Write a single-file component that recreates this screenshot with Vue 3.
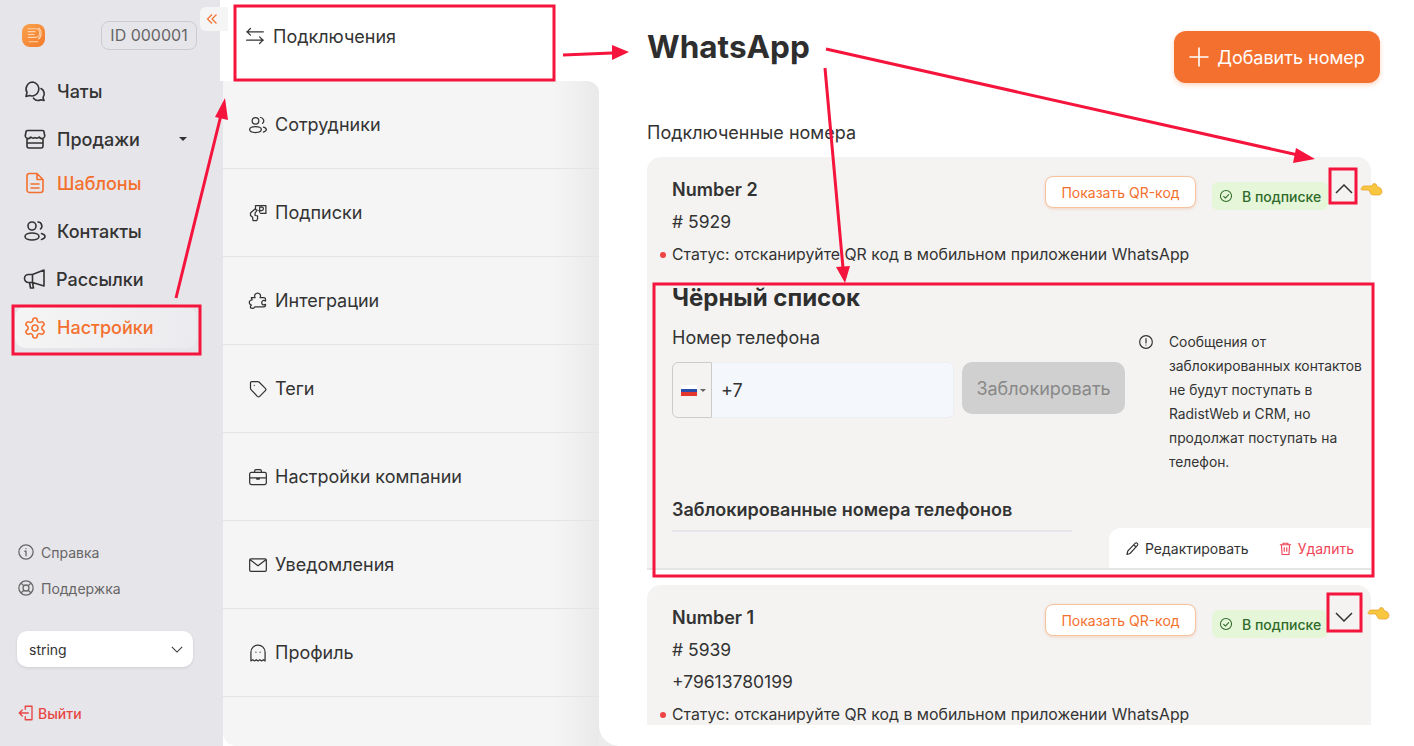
<script setup>
import { ref } from 'vue'

const icons = {
  chat: 'M10 3a7 7 0 0 0-6 10.500L3 17.500l3.500-1A7 7 0 1 0 10 3z M18 9.500a6 6 0 0 1 2 9l1 3-3.200-.8a6 6 0 0 1-7.300-1.500',
  store: 'M4.500 3.500h15a1.500 1.500 0 0 1 1.500 1.500l.8 4a3 3 0 0 1-5.600 1 3.400 3.400 0 0 1-4.200.6 3.400 3.400 0 0 1-4.200-.6 3 3 0 0 1-5.600-1L3 5a1.500 1.500 0 0 1 1.500-1.500z M4 11.500V19a2 2 0 0 0 2 2h12a2 2 0 0 0 2-2v-7.500 M4 16h16',
  doc: 'M6.500 2.500h7.500l6 6V19a2.500 2.500 0 0 1-2.500 2.500h-11A2.500 2.500 0 0 1 4 19V5a2.500 2.500 0 0 1 2.500-2.500z M14 2.500V8.500h6 M8 13h8 M8 17h8',
  users: 'M9 3a4 4 0 1 1 0 8 4 4 0 0 1 0-8z M9 14c-4 0-7 1.500-7 3.500S5 21 9 21s7-1.500 7-3.500S13 14 9 14z M15 3a4 4 0 0 1 2.500 7 M18.500 14.500c2 .6 3.500 1.700 3.500 3s-1.500 2.400-3.500 3',
  horn: 'M21 3v16L9.500 15.500H5.500a3.500 3.500 0 0 1 0-8h4z M9.500 7.500v8 M6.500 15.500l1 5.500h3l-1-5.500',
  gear: 'M12.220 2h-.44a2 2 0 0 0-2 2v.18a2 2 0 0 1-1 1.730l-.43.25a2 2 0 0 1-2 0l-.15-.08a2 2 0 0 0-2.730.73l-.22.38a2 2 0 0 0 .73 2.730l.15.1a2 2 0 0 1 1 1.720v.51a2 2 0 0 1-1 1.740l-.15.09a2 2 0 0 0-.73 2.730l.22.38a2 2 0 0 0 2.730.73l.15-.08a2 2 0 0 1 2 0l.43.25a2 2 0 0 1 1 1.730V20a2 2 0 0 0 2 2h.44a2 2 0 0 0 2-2v-.18a2 2 0 0 1 1-1.730l.43-.25a2 2 0 0 1 2 0l.15.08a2 2 0 0 0 2.730-.73l.22-.39a2 2 0 0 0-.73-2.730l-.15-.08a2 2 0 0 1-1-1.740v-.5a2 2 0 0 1 1-1.740l.15-.09a2 2 0 0 0 .73-2.730l-.22-.38a2 2 0 0 0-2.730-.73l-.15.08a2 2 0 0 1-2 0l-.43-.25a2 2 0 0 1-1-1.730V4a2 2 0 0 0-2-2z M12 9a3 3 0 1 0 0 6 3 3 0 0 0 0-6z',
  swap: 'M2 7h20 M6.500 3 2.500 7l4 4 M22 17H2 M17.500 13l4 4-4 4',
  money: 'M9 3h12.500v9.500H15 M9 3v4 M3 12l5-4.500 3 1-2.500 3.500v3l3 .5v3.500l-1 2H6l-.5-4L3 15z M14 11V5h2.500a2 2 0 0 1 0 4H13',
  puzzle: 'M4 8h4.500c-1.500-3 .5-5.500 3-5.500s4.500 2.500 3 5.500H19a2 2 0 0 1 2 2v2c-3-1.500-4.500 0-4.500 2s1.500 3.500 4.500 2v1a2 2 0 0 1-2 2H8c-.5 1.500-2 2-3.500 1.500C3 21 2 18.500 4 17c-2-1-3-3-2-5 1-1.500 2-1.500 3-1.500z',
  tag: 'M3 4.500A1.500 1.500 0 0 1 4.500 3h7.300a2 2 0 0 1 1.400.6l7.600 7.600a2 2 0 0 1 0 2.800l-6.800 6.800a2 2 0 0 1-2.800 0L3.600 12.700a2 2 0 0 1-.6-1.400z M7.500 7.500h.01',
  case: 'M4 6.500h16a2 2 0 0 1 2 2V19a2 2 0 0 1-2 2H4a2 2 0 0 1-2-2V8.500a2 2 0 0 1 2-2z M8 6.500V4.500A1.500 1.500 0 0 1 9.500 3h5A1.500 1.500 0 0 1 16 4.500v2 M2 13h20 M10.500 13h3v1.500h-3z',
  mail: 'M3.500 4.500h17A1.500 1.500 0 0 1 22 6v12a1.500 1.500 0 0 1-1.500 1.500h-17A1.500 1.500 0 0 1 2 18V6a1.500 1.500 0 0 1 1.500-1.500z M3 6l9 7 9-7',
  ghost: 'M3.500 21.500V11a8.500 8.500 0 0 1 17 0v10.500l-2.100-1.500-2.100 1.500-2.100-1.500-2.200 1.500-2.100-1.500-2.100 1.500-2.100-1.500z M9.500 11h.01 M14.500 11h.01',
  info: 'M12 2.500a9.500 9.500 0 1 0 0 19 9.500 9.500 0 0 0 0-19z M12 11v6 M10.500 11H12 M12 7.500h.01',
  help: 'M12 2.500a9.500 9.500 0 1 0 0 19 9.500 9.500 0 0 0 0-19z M12 8a4 4 0 1 0 0 8 4 4 0 0 0 0-8z M5.300 5.300l3.900 3.900 M14.800 14.800l3.900 3.900 M18.700 5.300l-3.900 3.900 M9.200 14.800l-3.900 3.900',
  logout: 'M11 3h9v18h-9 M11 3v4 M11 17v4 M15 12H3 M7 8l-4 4 4 4',
  alert: 'M12 2.500a9.500 9.500 0 1 0 0 19 9.500 9.500 0 0 0 0-19z M12 7v6.500 M12 16.500h.01',
  check: 'M12 2.500a9.500 9.500 0 1 0 0 19 9.500 9.500 0 0 0 0-19z M8 12.500l3 3 5.500-6',
  pencil: 'M16.500 3.500a2.500 2.500 0 0 1 3.500 3.500L8 20l-5 1.500L4.500 16z M14 6l4 4',
  trash: 'M3 6h18 M8 6V3.500h8V6 M5.500 6l1 15.500h11l1-15.500 M10 10v7 M14 10v7'
}

const mainNav = [
  { label: 'Чаты', icon: 'chat', cls: 'n-chat' },
  { label: 'Продажи', icon: 'store', cls: 'n-sales', caret: true },
  { label: 'Шаблоны', icon: 'doc', cls: 'n-tpl', orange: true },
  { label: 'Контакты', icon: 'users', cls: 'n-cont' },
  { label: 'Рассылки', icon: 'horn', cls: 'n-mail' },
  { label: 'Настройки', icon: 'gear', cls: 'n-set', orange: true, active: true }
]

const settingsNav = [
  { label: 'Сотрудники', icon: 'users' },
  { label: 'Подписки', icon: 'money' },
  { label: 'Интеграции', icon: 'puzzle' },
  { label: 'Теги', icon: 'tag' },
  { label: 'Настройки компании', icon: 'case' },
  { label: 'Уведомления', icon: 'mail' },
  { label: 'Профиль', icon: 'ghost' }
]

const handPath = 'M1362 187.500c0-1 1-1.500 2-1.500h7.500l2-2.500 2.500.5 1 2.500 3.500 1.500 1.500 3-.5 2.500-2 1.500h-6c-2 0-3-1-3-2l-1.500-2.500-1-.5h-5.500c-1 0-1.500-.5-1.500-1.500z'

const phone = ref('+7')
</script>

<template>
  <div class="page">
    <aside class="sidebar">
      <div class="side-head">
        <div class="logo">
          <svg viewBox="0 0 24 24" fill="none" stroke="#fcd3ac" stroke-width="1.200">
            <path d="M6 5h8a4.500 4.500 0 0 1 0 9H6 M6 8h8 M6 11h7 M17 4a7.500 7.500 0 0 1 0 12 M7 18.500h10" />
          </svg>
        </div>
        <div class="id-badge">ID 000001</div>
      </div>
      <nav class="main-nav">
        <a v-for="item in mainNav" :key="item.label" class="main-item" :class="[item.cls, { orange: item.orange, active: item.active }]">
          <svg class="ico-main" viewBox="0 0 24 24" fill="none" stroke="currentColor" stroke-width="1.600" stroke-linecap="round" stroke-linejoin="round">
            <path :d="icons[item.icon]" />
          </svg>
          <span>{{ item.label }}</span>
          <i v-if="item.caret" class="caret"></i>
        </a>
      </nav>
      <div class="side-foot">
        <a class="foot-link">
          <svg class="ico-foot" viewBox="0 0 24 24" fill="none" stroke="currentColor" stroke-width="1.700" stroke-linecap="round"><path :d="icons.info" /></svg>
          Справка
        </a>
        <a class="foot-link">
          <svg class="ico-foot" viewBox="0 0 24 24" fill="none" stroke="currentColor" stroke-width="1.700" stroke-linecap="round"><path :d="icons.help" /></svg>
          Поддержка
        </a>
        <div class="side-select">
          <span>string</span>
          <svg viewBox="0 0 14 8" fill="none" stroke="#333" stroke-width="1.200"><path d="M1 1l6 6 6-6" /></svg>
        </div>
        <a class="logout">
          <svg class="ico-foot" viewBox="0 0 24 24" fill="none" stroke="currentColor" stroke-width="1.800" stroke-linecap="round" stroke-linejoin="round"><path :d="icons.logout" /></svg>
          Выйти
        </a>
      </div>
    </aside>

    <div class="settings-col">
      <button class="collapse">
        <svg viewBox="0 0 12 12" fill="none" stroke="#f4702e" stroke-width="1.200"><path d="M6 1.500 1.500 6 6 10.500 M10.500 1.500 6 6l4.500 4.500" /></svg>
      </button>
      <div class="set-top">
        <svg class="ico-set" viewBox="0 0 24 24" fill="none" stroke="#333" stroke-width="1.500" stroke-linecap="round" stroke-linejoin="round"><path :d="icons.swap" /></svg>
        Подключения
      </div>
      <div class="set-list">
        <a v-for="item in settingsNav" :key="item.label" class="set-item">
          <svg class="ico-set" viewBox="0 0 24 24" fill="none" stroke="#333" stroke-width="1.500" stroke-linecap="round" stroke-linejoin="round"><path :d="icons[item.icon]" /></svg>
          {{ item.label }}
        </a>
      </div>
    </div>

    <main class="content">
      <header class="content-head">
        <h1>WhatsApp</h1>
        <button class="add-btn">
          <svg viewBox="0 0 20 20" fill="none" stroke="#fff" stroke-width="1.600" stroke-linecap="round"><path d="M10 1v18 M1 10h18" /></svg>
          Добавить номер
        </button>
      </header>
      <div class="sub">Подключенные номера</div>

      <div class="cards">
        <section class="card open">
          <div class="card-top">
            <div class="card-name">Number 2</div>
            <button class="qr">Показать QR-код</button>
            <div class="sub-badge">
              <svg viewBox="0 0 24 24" fill="none" stroke="currentColor" stroke-width="1.800" stroke-linecap="round" stroke-linejoin="round"><path :d="icons.check" /></svg>
              В подписке
            </div>
            <svg class="chev" viewBox="0 0 18 10" fill="none" stroke="#333" stroke-width="1.500"><path d="M1 9l8-8 8 8" /></svg>
          </div>
          <div class="card-line">#&nbsp;5929</div>
          <div class="card-status"><i class="dot"></i>Статус: отсканируйте QR код в мобильном приложении WhatsApp</div>

          <div class="blacklist">
            <h2>Чёрный список</h2>
            <div class="bl-row">
              <div class="bl-form">
                <label>Номер телефона</label>
                <div class="bl-inputs">
                  <div class="phone">
                    <div class="flag-box">
                      <span class="flag"></span>
                      <i class="flag-caret"></i>
                    </div>
                    <input v-model="phone" />
                  </div>
                  <button class="block-btn">Заблокировать</button>
                </div>
              </div>
              <div class="bl-note">
                <svg viewBox="0 0 24 24" fill="none" stroke="#333" stroke-width="1.800" stroke-linecap="round"><path :d="icons.alert" /></svg>
                <p>Сообщения от заблокированных контактов не будут поступать в RadistWeb и CRM, но продолжат поступать на телефон.</p>
              </div>
            </div>
            <div class="bl-foot">
              <h3>Заблокированные номера телефонов</h3>
            </div>
            <div class="row-actions">
              <a class="act">
                <svg viewBox="0 0 24 24" fill="none" stroke="currentColor" stroke-width="1.800" stroke-linejoin="round"><path :d="icons.pencil" /></svg>
                Редактировать
              </a>
              <a class="act del">
                <svg viewBox="0 0 24 24" fill="none" stroke="currentColor" stroke-width="1.800" stroke-linejoin="round"><path :d="icons.trash" /></svg>
                Удалить
              </a>
            </div>
          </div>
        </section>

        <section class="card">
          <div class="card-top">
            <div class="card-name">Number 1</div>
            <button class="qr">Показать QR-код</button>
            <div class="sub-badge">
              <svg viewBox="0 0 24 24" fill="none" stroke="currentColor" stroke-width="1.800" stroke-linecap="round" stroke-linejoin="round"><path :d="icons.check" /></svg>
              В подписке
            </div>
            <svg class="chev" viewBox="0 0 18 10" fill="none" stroke="#333" stroke-width="1.500"><path d="M1 1l8 8 8-8" /></svg>
          </div>
          <div class="card-line">#&nbsp;5939</div>
          <div class="card-line">+79613780199</div>
          <div class="card-status"><i class="dot"></i>Статус: отсканируйте QR код в мобильном приложении WhatsApp</div>
        </section>
      </div>
    </main>

    <!-- пометки поверх скриншота -->
    <svg class="marks" viewBox="0 0 1414 746" fill="none" stroke="#f5143c" stroke-width="3">
      <rect x="235" y="6" width="319" height="74" />
      <rect x="13" y="306" width="187" height="48" />
      <rect x="654" y="284" width="719" height="292" />
      <rect x="1330" y="169" width="26" height="34" />
      <rect x="1328" y="594" width="33" height="37" />
      <path d="M176 298 221 115 M563 55 612 53 M826 49 1298 155 M825 68 843 268" />
      <path d="M225 98 228 120 215 117z M629 52 612 45 612 60z M1315 159 1296 148 1293 163z M845 283 850 266 836 267z" fill="#f5143c" stroke="none" />
      <path :d="handPath" fill="#f8c63f" stroke="#e59f24" stroke-width="0.700" />
      <path :d="handPath" transform="translate(7 424)" fill="#f8c63f" stroke="#e59f24" stroke-width="0.700" />
    </svg>
  </div>
</template>

<style>
html, body { margin: 0; background: #fff; }
</style>

<style scoped>
.page {
  position: relative;
  display: flex;
  width: 1414px;
  height: 746px;
  overflow: hidden;
  background: #fff;
  font-family: Inter, "Noto Sans", sans-serif;
  color: #333;
}
.sidebar {
  width: 223px;
  flex: none;
  display: flex;
  flex-direction: column;
  background: #e6e5ea;
  box-sizing: border-box;
}
.side-head {
  display: flex;
  align-items: center;
  justify-content: space-between;
  padding: 21px 26px 0 22px;
}
.logo {
  width: 23px;
  height: 23px;
  border-radius: 8px;
  background: linear-gradient(135deg, #f9a24d, #f37a2a);
  display: flex;
}
.logo svg { width: 23px; height: 23px; }
.id-badge {
  width: 96px;
  height: 29px;
  box-sizing: border-box;
  border: 1px solid #ccc;
  border-radius: 8px;
  font-size: 16px;
  line-height: 27px;
  text-align: center;
  color: #666;
}
.main-nav {
  margin-top: 17px;
  display: flex;
  flex-direction: column;
}
.main-item {
  display: flex;
  align-items: center;
  gap: 10px;
  height: 48px;
  padding-left: 23px;
  font-size: 18px;
  font-weight: 500;
  color: #333;
}
.ico-main { width: 24px; height: 24px; flex: none; }
.n-tpl { height: 40px; margin-bottom: 4px; }
.n-mail { gap: 9px; }
.orange { color: #f4702e; }
.active {
  height: 41px;
  width: 182px;
  box-sizing: border-box;
  margin: 4px 0 0 15px;
  padding-left: 8px;
  border-radius: 10px;
  background: linear-gradient(100deg, #f5f5f5, #ebeaee);
}
.caret {
  margin-left: 29px;
  border-left: 4px solid transparent;
  border-right: 4px solid transparent;
  border-top: 4px solid #333;
}
.side-foot {
  margin-top: auto;
  padding: 0 0 24px 17px;
  display: flex;
  flex-direction: column;
}
.foot-link {
  display: flex;
  align-items: center;
  gap: 6px;
  height: 36px;
  font-size: 14px;
  color: #666;
}
.ico-foot { width: 18px; height: 18px; flex: none; }
.side-select {
  margin-top: 25px;
  width: 176px;
  height: 36px;
  box-sizing: border-box;
  padding: 0 10px 0 12px;
  display: flex;
  align-items: center;
  justify-content: space-between;
  background: #fff;
  border-radius: 10px;
  box-shadow: 0 1px 3px rgba(0, 0, 0, 0.1);
  font-size: 14px;
  color: #333;
}
.side-select svg { width: 12px; height: 7px; }
.logout {
  margin-top: 37px;
  display: flex;
  align-items: center;
  gap: 3px;
  font-size: 14px;
  font-weight: 500;
  color: #e84545;
  height: 18px;
}
.settings-col {
  position: relative;
  width: 376px;
  flex: none;
  display: flex;
  flex-direction: column;
}
.collapse {
  position: absolute;
  left: -23px;
  top: 7px;
  width: 28px;
  height: 24px;
  padding: 0 6px;
  border: 0;
  border-radius: 6px 0 0 6px;
  background: #f5f5f6;
  display: flex;
  align-items: center;
}
.collapse svg { width: 12px; height: 12px; }
.set-top {
  height: 81px;
  margin-left: -3px;
  box-sizing: border-box;
  padding: 26px 0 0 25px;
  display: flex;
  align-items: flex-start;
  gap: 8px;
  background: #fff;
  font-size: 18px;
  line-height: 21px;
}
.set-list {
  position: relative;
  flex: 1;
  background: linear-gradient(90deg, #f5f5f5 88%, #e9e9ea 100%);
  border-top-right-radius: 12px;
  border-bottom-left-radius: 14px;
}
/* угол белой области внизу */
.set-list::after {
  content: "";
  position: absolute;
  left: 100%;
  bottom: 0;
  width: 20px;
  height: 20px;
  background: radial-gradient(circle 20px at 100% 0, transparent 19.500px, #ececed 20px);
}
.set-item {
  display: flex;
  align-items: center;
  gap: 7px;
  height: 87px;
  padding-left: 25px;
  border-bottom: 1px solid #e4e4e6;
  font-size: 18px;
  color: #333;
}
.ico-set { width: 20px; height: 20px; flex: none; }
.content {
  flex: 1;
  min-width: 0;
  padding: 0 34px 0 48px;
  display: flex;
  flex-direction: column;
}
.content-head {
  height: 94px;
  display: flex;
  align-items: flex-start;
  justify-content: space-between;
}
h1 {
  margin: 26px 0 0;
  font-size: 31.500px;
  line-height: 42px;
  font-weight: 700;
  color: #2e2e2e;
}
.add-btn {
  margin-top: 31px;
  width: 206px;
  height: 52px;
  border: 0;
  border-radius: 12px;
  background: #f4702e;
  color: #fff;
  font: 400 18px Inter, sans-serif;
  display: flex;
  align-items: center;
  justify-content: center;
  gap: 8px;
  box-shadow: 0 2px 5px rgba(244, 112, 46, 0.3);
}
.add-btn svg { width: 20px; height: 20px; }
.sub {
  margin-top: 29px;
  font-size: 18px;
  line-height: 20px;
  font-weight: 400;
}
.cards {
  margin-top: 14px;
  height: 568px;
  width: 724px;
  overflow: hidden;
  display: flex;
  flex-direction: column;
  gap: 15px;
}
.card {
  flex: none;
  position: relative;
  box-sizing: border-box;
  border-radius: 14px;
  background: #f4f3f2;
  padding: 21px 0 0 25px;
}
.card.open {
  height: 413px;
  border-radius: 14px 14px 0 0;
  border-bottom: 2px solid #e5e5e6;
}
.card:not(.open) { height: 200px; }
.card-top {
  display: flex;
  align-items: flex-start;
  height: 28px;
}
.card-name {
  font-size: 18px;
  font-weight: 600;
  line-height: 24px;
  width: 373px;
}
.qr {
  margin-top: -2px;
  width: 151px;
  height: 32px;
  border: 1px solid #f7c39f;
  border-radius: 8px;
  background: #fff;
  color: #f4702e;
  font: 400 14px Inter, sans-serif;
  box-shadow: 0 1px 3px rgba(244, 112, 46, 0.25);
}
.sub-badge {
  margin: 4px 0 0 16px;
  width: 116px;
  height: 28px;
  box-sizing: border-box;
  display: flex;
  align-items: center;
  gap: 9px;
  padding-left: 7px;
  border-radius: 6px;
  background: #e6f6d8;
  font-size: 14px;
  font-weight: 500;
  color: #2f6b2a;
}
.sub-badge svg { width: 14px; height: 14px; }
.chev {
  margin: 6px 0 0 7px;
  width: 18px;
  height: 10px;
}
.card-line {
  font-size: 17.500px;
  line-height: 32px;
  height: 32px;
}
.card-status {
  position: relative;
  margin-top: 1px;
  font-size: 15.850px;
  line-height: 32px;
}
.dot {
  position: absolute;
  left: -12px;
  top: 13px;
  width: 6px;
  height: 6px;
  border-radius: 50%;
  background: #ef4444;
}
.blacklist { position: relative; }
h2 {
  margin: 13px 0 0;
  font-size: 24px;
  line-height: 28px;
  font-weight: 700;
  color: #2e2e2e;
}
.bl-row {
  display: flex;
  margin-top: 14px;
}
.bl-form { width: 466px; flex: none; }
label {
  display: block;
  font-size: 18px;
  line-height: 24px;
  height: 36px;
}
.bl-inputs {
  display: flex;
  gap: 8px;
  align-items: flex-start;
}
.phone {
  display: flex;
  width: 282px;
  height: 56px;
  box-sizing: border-box;
}
.flag-box {
  width: 40px;
  flex: none;
  display: flex;
  align-items: center;
  gap: 3px;
  padding-left: 8px;
  box-sizing: border-box;
  background: #f4f3f2;
  border: 1px solid #ccc;
  border-radius: 6px 0 0 6px;
}
.flag {
  width: 16px;
  height: 11px;
  background: linear-gradient(#fff 33%, #2a4ea8 33% 66%, #e0362c 66%);
}
.flag-caret {
  border-left: 3px solid transparent;
  border-right: 3px solid transparent;
  border-top: 3px solid #666;
}
input {
  flex: 1;
  min-width: 0;
  border: 1px solid #eceef2;
  border-left: 0;
  border-radius: 0 6px 6px 0;
  outline: 0;
  background: #f4f8fc;
  padding: 0 0 0 9px;
  font: 400 18px Inter, sans-serif;
  color: #333;
}
.block-btn {
  width: 163px;
  height: 52px;
  border: 0;
  border-radius: 10px;
  background: #d0d0d0;
  color: #888;
  font: 400 18px Inter, sans-serif;
}
.bl-note {
  display: flex;
  gap: 15px;
  margin-top: 4px;
  width: 232px;
}
.bl-note svg { width: 16px; height: 16px; flex: none; margin-top: 4px; }
.bl-note p {
  margin: 0;
  width: 198px;
  font-size: 13.850px;
  line-height: 24px;
  color: #333;
}
.bl-foot {
  position: absolute;
  left: 0;
  top: 214px;
  width: 400px;
  border-bottom: 2px solid #e6e5ea;
  height: 32px;
}
h3 {
  margin: 0;
  font-size: 18px;
  line-height: 24px;
  font-weight: 600;
}
.row-actions {
  position: absolute;
  left: 437px;
  right: 0;
  top: 244px;
  height: 40px;
  box-sizing: border-box;
  display: flex;
  align-items: center;
  justify-content: space-between;
  padding: 0 17px 0 16px;
  background: #fff;
  border-top-left-radius: 12px;
}
.act {
  display: flex;
  align-items: center;
  gap: 5px;
  font-size: 14px;
  color: #333;
}
.act svg { width: 15px; height: 15px; }
.del { color: #f04458; }
.marks {
  position: absolute;
  left: 0;
  top: 0;
  width: 1414px;
  height: 746px;
  pointer-events: none;
}
</style>
